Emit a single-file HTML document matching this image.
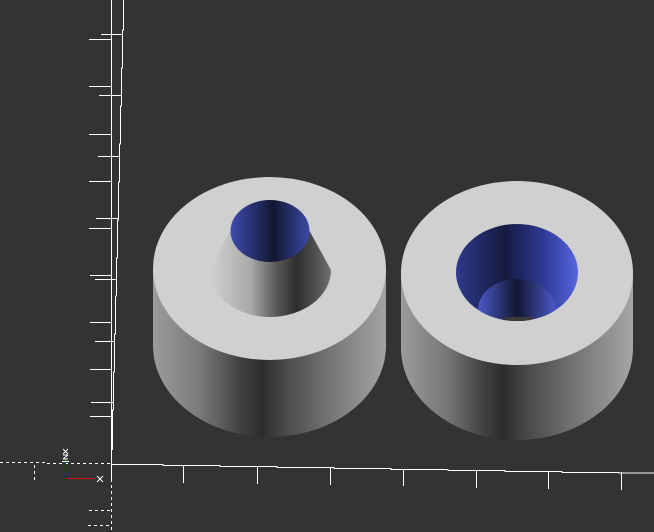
<!DOCTYPE html>
<html><head><meta charset="utf-8"><style>
html,body{margin:0;padding:0;background:#333333;width:654px;height:532px;overflow:hidden}
svg{display:block}
</style></head><body>
<svg width="654" height="532" viewBox="0 0 654 532" xmlns="http://www.w3.org/2000/svg">
<defs>
<linearGradient id="sideL" x1="153" x2="386" gradientUnits="userSpaceOnUse">
<stop offset="0" stop-color="#9c9c9c"/><stop offset="0.2" stop-color="#7a7a7a"/><stop offset="0.38" stop-color="#404040"/><stop offset="0.47" stop-color="#2c2c2c"/><stop offset="0.56" stop-color="#484848"/><stop offset="0.8" stop-color="#7e7e7e"/><stop offset="1" stop-color="#a4a4a4"/>
</linearGradient>
<linearGradient id="sideR" x1="401" x2="633" gradientUnits="userSpaceOnUse">
<stop offset="0" stop-color="#9c9c9c"/><stop offset="0.2" stop-color="#767676"/><stop offset="0.36" stop-color="#404040"/><stop offset="0.44" stop-color="#2c2c2c"/><stop offset="0.54" stop-color="#484848"/><stop offset="0.8" stop-color="#7e7e7e"/><stop offset="1" stop-color="#a6a6a6"/>
</linearGradient>
<linearGradient id="cone" x1="208" x2="331" gradientUnits="userSpaceOnUse">
<stop offset="0" stop-color="#d4d4d4"/><stop offset="0.35" stop-color="#a8a8a8"/><stop offset="0.55" stop-color="#5a5a5a"/><stop offset="0.72" stop-color="#2e2e2e"/><stop offset="0.85" stop-color="#4a4a4a"/><stop offset="1" stop-color="#707070"/>
</linearGradient>
<linearGradient id="blueL" x1="231" x2="309" gradientUnits="userSpaceOnUse">
<stop offset="0" stop-color="#3d4cab"/><stop offset="0.55" stop-color="#121632"/><stop offset="1" stop-color="#3b49a6"/>
</linearGradient>
<linearGradient id="blueO" x1="456" x2="578" gradientUnits="userSpaceOnUse">
<stop offset="0" stop-color="#2e3a8a"/><stop offset="0.4" stop-color="#151a40"/><stop offset="0.7" stop-color="#2c3890"/><stop offset="1" stop-color="#5566e0"/>
</linearGradient>
<linearGradient id="blueI" x1="478" x2="556" gradientUnits="userSpaceOnUse">
<stop offset="0" stop-color="#4b5ac8"/><stop offset="0.5" stop-color="#121632"/><stop offset="1" stop-color="#4a59c8"/>
</linearGradient>
<clipPath id="holeclip"><ellipse cx="517" cy="272.5" rx="61" ry="48.5"/></clipPath>
</defs>

<!-- axes -->
<g stroke="#ffffff" stroke-width="1" fill="none">
<line x1="111.5" y1="0" x2="111.5" y2="463"/>
<polyline points="123.5,0 123.5,30 122.5,30 122.5,68 121.5,68 121.5,106 120.5,106 120.5,144 119.5,144 119.5,182 118.5,182 118.5,220 117.5,220 117.5,258 116.5,258 116.5,296 115.5,296 115.5,334 114.5,334 114.5,372 113.5,372 113.5,410 112.5,410 112.5,450"/>
<line x1="89" y1="39.5" x2="111" y2="39.5"/>
<line x1="101" y1="34.5" x2="123" y2="34.5"/>
<line x1="89" y1="86.5" x2="111" y2="86.5"/>
<line x1="99" y1="95.5" x2="122" y2="95.5"/>
<line x1="89" y1="134.5" x2="111" y2="134.5"/>
<line x1="98" y1="156.5" x2="119" y2="156.5"/>
<line x1="89" y1="181.5" x2="111" y2="181.5"/>
<line x1="96" y1="218.5" x2="118" y2="218.5"/>
<line x1="89" y1="228.5" x2="111" y2="228.5"/>
<line x1="90" y1="275.5" x2="111" y2="275.5"/>
<line x1="95" y1="279.5" x2="116" y2="279.5"/>
<line x1="90" y1="322.5" x2="111" y2="322.5"/>
<line x1="95" y1="341.5" x2="114" y2="341.5"/>
<line x1="90" y1="369.5" x2="111" y2="369.5"/>
<line x1="91" y1="402.5" x2="113" y2="402.5"/>
<line x1="90" y1="416.5" x2="111" y2="416.5"/>
<polyline points="111,464.5 163,464.5 163,465.5 220,465.5 220,466.5 277,466.5 277,467.5 334,467.5 334,468.5 391,468.5 391,469.5 448,469.5 448,470.5 505,470.5 505,471.5 562,471.5 562,472.5 619,472.5 619,473 654,473"/>
<line x1="183.5" y1="465" x2="183.5" y2="483"/>
<line x1="257.5" y1="466" x2="257.5" y2="484"/>
<line x1="330.5" y1="468" x2="330.5" y2="485"/>
<line x1="403.5" y1="469" x2="403.5" y2="486"/>
<line x1="476.5" y1="470" x2="476.5" y2="488"/>
<line x1="548.5" y1="471" x2="548.5" y2="489"/>
<line x1="621.5" y1="472" x2="621.5" y2="490"/>
<line x1="111.5" y1="463" x2="111.5" y2="482"/>
</g>
<g stroke="#ffffff" stroke-width="1" fill="none" stroke-dasharray="3,3">
<line x1="0" y1="462.5" x2="46" y2="462.5"/>
<line x1="47" y1="463.5" x2="110" y2="463.5"/>
<line x1="34.5" y1="465" x2="34.5" y2="480"/>
<line x1="111.5" y1="485" x2="111.5" y2="532"/>
<line x1="89" y1="510.5" x2="110" y2="510.5"/>
<line x1="88" y1="525.5" x2="110" y2="525.5"/>
</g>
<line x1="65.5" y1="462" x2="65.5" y2="478" stroke="#2020c0" stroke-width="1"/>
<line x1="65.5" y1="460" x2="65.5" y2="463" stroke="#20c020" stroke-width="1"/>
<line x1="66" y1="478.5" x2="95" y2="478.5" stroke="#d01010" stroke-width="1"/>
<g stroke="#ffffff" stroke-width="1">
<line x1="62" y1="461.5" x2="69" y2="461.5"/>
<line x1="97" y1="476" x2="103" y2="482"/><line x1="103" y1="476" x2="97" y2="482"/>
<line x1="63" y1="449" x2="68" y2="454"/><line x1="68" y1="449" x2="63" y2="454"/>
<line x1="63" y1="455" x2="68" y2="455"/><line x1="68" y1="455" x2="63" y2="459"/><line x1="63" y1="459" x2="68" y2="459"/>
</g>

<!-- left cylinder -->
<path d="M153,268.5 L153,345.5 A116.5,91.5 0 0 0 386,345.5 L386,268.5 Z" fill="url(#sideL)"/>
<ellipse cx="269.5" cy="268.5" rx="116.5" ry="91.5" fill="#d0d0d0"/>
<path d="M231,230 L209,270 A61,47 0 0 0 331,270 L309,230 Z" fill="url(#cone)"/>
<ellipse cx="270" cy="231" rx="39.5" ry="31" fill="url(#blueL)"/>

<!-- right cylinder -->
<path d="M401,273 L401,348 A116,92 0 0 0 633,348 L633,273 Z" fill="url(#sideR)"/>
<ellipse cx="517" cy="273" rx="116" ry="92" fill="#d0d0d0"/>
<ellipse cx="517" cy="272.5" rx="61" ry="48.5" fill="url(#blueO)"/>
<g clip-path="url(#holeclip)">
<ellipse cx="517" cy="310" rx="39" ry="31" fill="url(#blueI)"/>
<rect x="505" y="317" width="28" height="5" fill="#3a3a3a"/>
</g>
</svg>
</body></html>
